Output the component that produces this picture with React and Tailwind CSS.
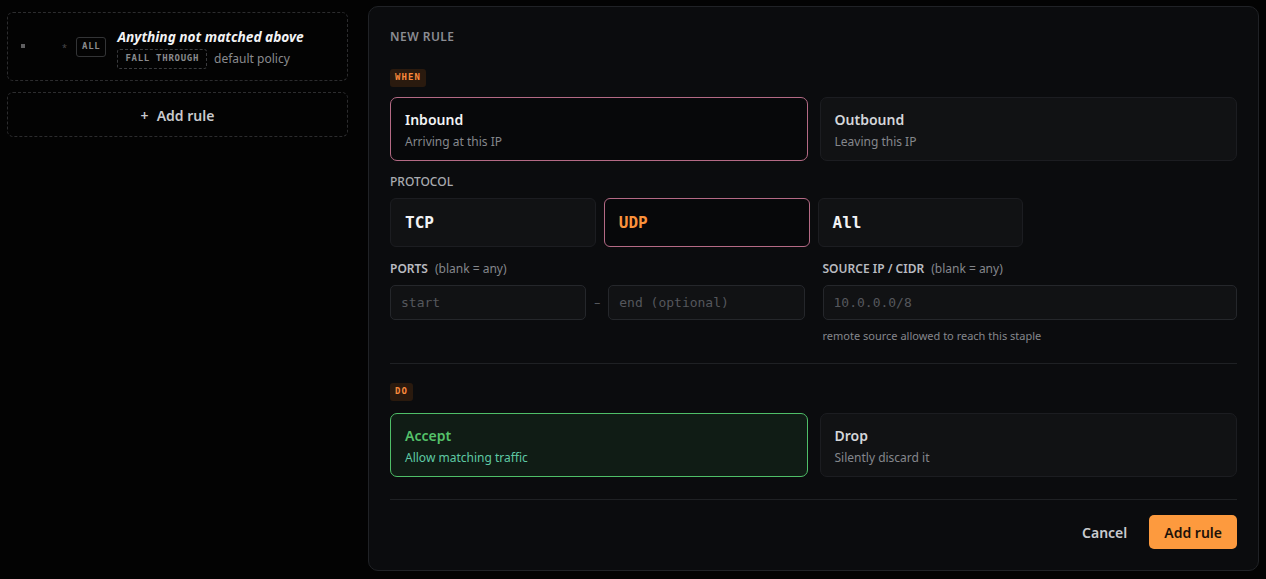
import React, { useState } from 'react';

const SANS = { fontFamily: '"Noto Sans", "Open Sans", sans-serif' };
const MONO = '[font-family:"DejaVu_Sans_Mono","Liberation_Mono",monospace]';

function StepBadge({ children }) {
  return (
    <div className="flex">
      <span className={`flex items-center h-[18px] px-[5px] rounded-[3px] bg-[#2a1a0e] text-[#fb8a3c] text-[9px] font-bold tracking-[0.12em] ${MONO}`}>
        {children}
      </span>
    </div>
  );
}

function ChoiceCard({ title, sub, active, tone = 'pink', onClick }) {
  let box = 'bg-[#111214] border-[#1c1d21]';
  let titleCls = 'text-[#d4d6da]';
  let subCls = 'text-[#85878c]';
  if (active && tone === 'pink') {
    box = 'bg-[#07080a] border-[#b46a85]';
    titleCls = 'text-[#f2f3f5]';
  }
  if (active && tone === 'green') {
    box = 'bg-[#101c15] border-[#4fbf68]';
    titleCls = 'text-[#55c26a]';
    subCls = 'text-[#5ec9a4]';
  }
  return (
    <button
      type="button"
      onClick={onClick}
      className={`h-[64px] rounded-[7px] border text-left px-[14px] pt-[3px] flex flex-col justify-center ${box}`}
    >
      <span className={`text-[14px] font-semibold leading-[18px] ${titleCls}`}>{title}</span>
      <span className={`text-[12px] leading-[16px] mt-[5px] ${subCls}`}>{sub}</span>
    </button>
  );
}

function ProtoButton({ label, active, onClick }) {
  return (
    <button
      type="button"
      onClick={onClick}
      className={`h-[49px] rounded-[6px] border text-left px-[14px] text-[16px] font-bold ${MONO} ${
        active ? 'bg-[#07080a] border-[#b46a85] text-[#fb923c]' : 'bg-[#111214] border-[#1c1d21] text-[#f2f3f5]'
      }`}
    >
      {label}
    </button>
  );
}

function TextInput({ placeholder, className = '' }) {
  return (
    <input
      placeholder={placeholder}
      className={`h-[35px] rounded-[5px] border border-[#25272b] bg-[#111214] px-[10px] text-[13px] text-[#d4d6da] placeholder:text-[#55575c] outline-none ${MONO} ${className}`}
    />
  );
}

function FieldLabel({ name }) {
  return (
    <div className="leading-[16px]">
      <span className="text-[12px] font-semibold text-[#b9bbc0]">{name}</span>
      <span className="ml-[7px] text-[12px] text-[#85878c]">(blank = any)</span>
    </div>
  );
}

function SidePanel() {
  return (
    <div className="w-[341px] ml-[7px] mt-[12px] flex flex-col gap-[11px]">
      <div className="h-[69px] rounded-[6px] border border-dashed border-[#2c2c2e] flex items-center pl-[13px]">
        <span className="w-[4px] h-[4px] bg-[#5e5e60] mt-[-2px]" />
        <span className="ml-[37px] w-[4px] text-[9px] text-[#4a4a4c] mt-[2px]">*</span>
        <span className={`ml-[10px] h-[20px] px-[5px] rounded-[3px] border border-[#333436] flex items-center text-[9px] font-bold tracking-[0.08em] text-[#8a8b8e] ${MONO}`}>
          ALL
        </span>
        <div className="ml-[11px] mt-[4px] flex flex-col">
          <span className="text-[13.7px] font-bold italic text-[#f2f2f4] leading-[18px]">Anything not matched above</span>
          <div className="flex items-center mt-[3px]">
            <span className={`h-[20px] px-[7px] rounded-[3px] border border-dashed border-[#3a3b3e] flex items-center text-[9px] font-bold tracking-[0.08em] text-[#8a8b8e] ${MONO}`}>
              FALL THROUGH
            </span>
            <span className="ml-[7px] text-[12px] text-[#8a8b8e]">default policy</span>
          </div>
        </div>
      </div>
      <button
        type="button"
        className="h-[45px] pt-[2px] rounded-[6px] border border-dashed border-[#2c2c2e] flex items-center justify-center gap-[8px] text-[14px] font-semibold text-[#c9cacd]"
      >
        <span>+</span>
        <span>Add rule</span>
      </button>
    </div>
  );
}

export default function App() {
  const [dir, setDir] = useState('in');
  const [proto, setProto] = useState('UDP');
  const [action, setAction] = useState('accept');

  return (
    <div style={SANS} className="w-[1266px] h-[579px] bg-[#030303] flex overflow-hidden">
      <SidePanel />
      <div className="ml-[20px] mt-[6px] w-[891px] h-[565px] rounded-[10px] border border-[#202226] bg-[#0b0c0e] px-[21px] pt-[22px] flex flex-col">
        <div className="text-[12px] font-semibold tracking-[0.04em] text-[#8b8d92] leading-[16px]">NEW RULE</div>

        <div className="mt-[24px]"><StepBadge>WHEN</StepBadge></div>
        <div className="mt-[10px] grid grid-cols-2 gap-[12px]">
          <ChoiceCard title="Inbound" sub="Arriving at this IP" active={dir === 'in'} onClick={() => setDir('in')} />
          <ChoiceCard title="Outbound" sub="Leaving this IP" active={dir === 'out'} onClick={() => setDir('out')} />
        </div>

        <div className="mt-[13px] text-[12px] font-medium text-[#a9abb0] leading-[16px]">PROTOCOL</div>
        <div className="mt-[8px] grid grid-cols-4 gap-2">
          {['TCP', 'UDP', 'All'].map((p) => (
            <ProtoButton key={p} label={p} active={proto === p} onClick={() => setProto(p)} />
          ))}
        </div>

        <div className="mt-[12px] grid grid-cols-2 gap-[18px]">
          <div>
            <FieldLabel name="PORTS" />
            <div className="mt-[8px] flex items-center gap-[8px]">
              <TextInput placeholder="start" className="flex-1 min-w-0" />
              <span className="text-[#55575c] text-[12px]">–</span>
              <TextInput placeholder="end (optional)" className="flex-1 min-w-0" />
            </div>
          </div>
          <div>
            <FieldLabel name="SOURCE IP / CIDR" />
            <TextInput placeholder="10.0.0.0/8" className="mt-[8px] w-full" />
            <div className="mt-[8px] text-[11px] text-[#85878c] leading-[16px]">remote source allowed to reach this staple</div>
          </div>
        </div>

        <div className="mt-[19px] h-px bg-[#1f2124]" />

        <div className="mt-[19px]"><StepBadge>DO</StepBadge></div>
        <div className="mt-[12px] grid grid-cols-2 gap-[12px]">
          <ChoiceCard title="Accept" sub="Allow matching traffic" tone="green" active={action === 'accept'} onClick={() => setAction('accept')} />
          <ChoiceCard title="Drop" sub="Silently discard it" active={action === 'drop'} onClick={() => setAction('drop')} />
        </div>

        <div className="mt-[22px] h-px bg-[#1f2124]" />

        <div className="mt-[15px] flex justify-end items-center gap-[6px]">
          <button type="button" className="h-[34px] px-[16px] text-[14px] font-semibold text-[#c9cbcf]">Cancel</button>
          <button type="button" className="h-[34px] px-[15px] rounded-[5px] bg-[#fd9a3e] text-[14px] font-semibold text-[#1c1209]">Add rule</button>
        </div>
      </div>
    </div>
  );
}
